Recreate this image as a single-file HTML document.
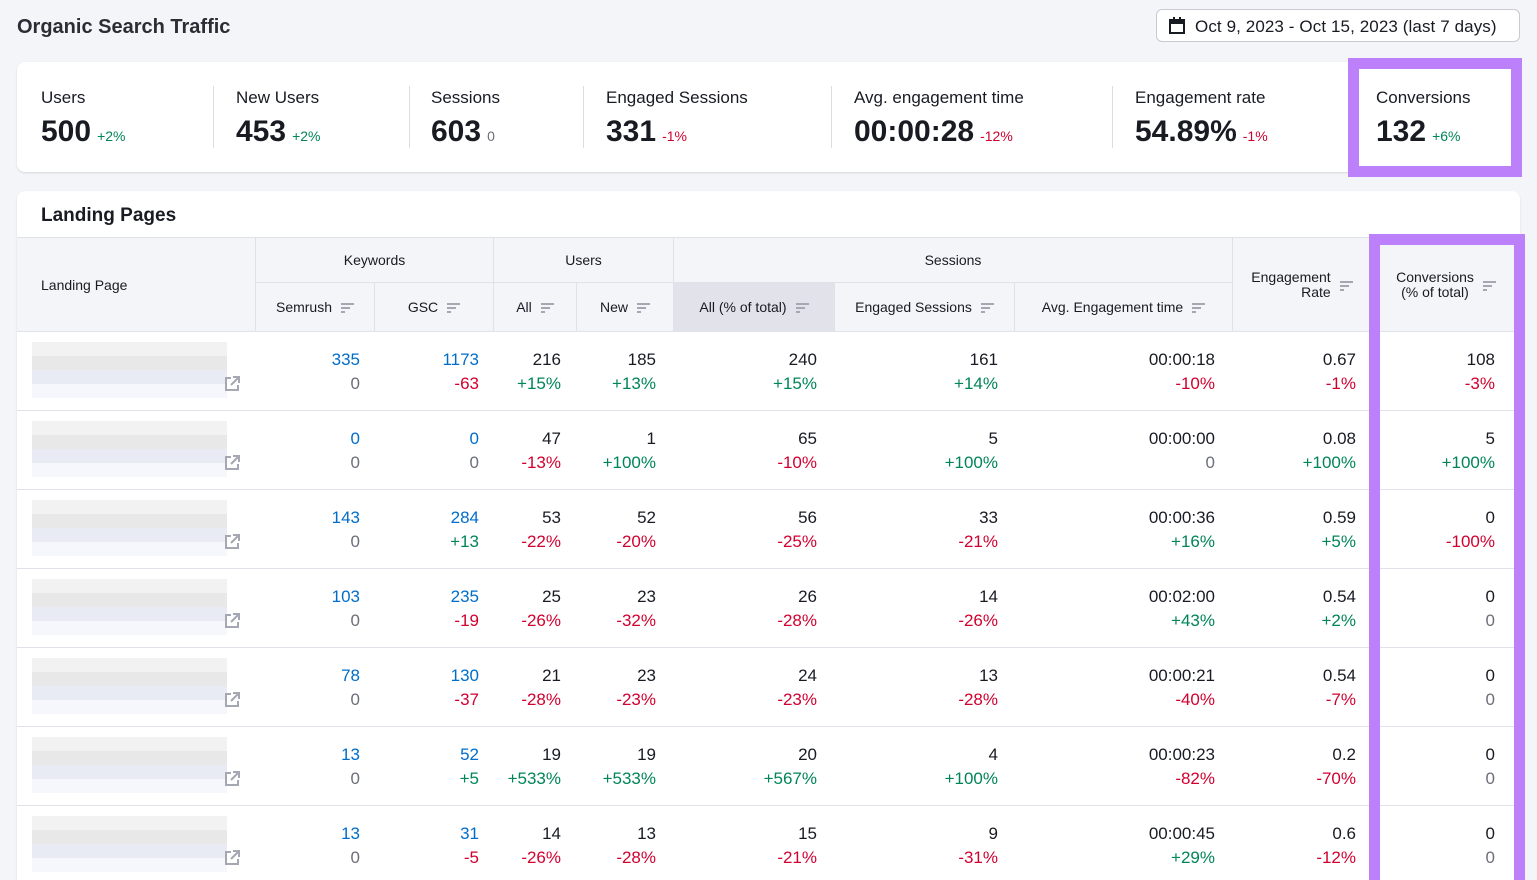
<!DOCTYPE html>
<html><head><meta charset="utf-8"><style>
*{box-sizing:border-box;margin:0;padding:0}
html,body{width:1537px;height:880px;overflow:hidden}
body{background:#f4f5f9;font-family:"Liberation Sans",sans-serif;color:#191b23;position:relative}
.abs{position:absolute}
h1{position:absolute;left:17px;top:16px;font-size:20px;font-weight:bold;color:#2b2d35}
.date{left:1156px;top:9px;width:364px;height:33px;border:1px solid #c9cad1;border-radius:6px;background:#fff;font-size:17px;padding:7px 0 0 38px;color:#191b23;letter-spacing:.1px}
.kpi{left:17px;top:62px;width:1503px;height:110px;background:#fff;border-radius:8px;box-shadow:0 1px 2px rgba(0,0,0,.12)}
.k{position:absolute;top:26px}
.k .l{font-size:17px;color:#191b23}
.k .v{font-size:30px;font-weight:bold;margin-top:7px}
.k .v span{font-size:14px;font-weight:normal;margin-left:6px}
.sep{position:absolute;top:24px;width:1px;height:62px;background:#dcdde3}
.g{color:#008557}.r{color:#d1002f}.b{color:#006dca}.gr{color:#6c6e79}
.card{left:17px;top:191px;width:1503px;height:700px;background:#fff;border-radius:8px;box-shadow:0 1px 2px rgba(0,0,0,.1)}
.hd{position:absolute;background:#f4f5f9;border-right:1px solid #e0e1e9;border-bottom:1px solid #e0e1e9;font-size:14px;color:#191b23;display:flex;align-items:center;justify-content:center}
.sort{display:inline-block;width:13px;height:10px;margin-left:9px;position:relative;top:1px}
.sort i{display:block;height:2px;background:#a5a7b2;margin-bottom:2px}
.row{position:absolute;left:17px;width:1503px;height:79px;border-bottom:1px solid #e0e1e9}
.c{position:absolute;top:16px;text-align:right;font-size:17px;line-height:24px}
.ph{position:absolute;left:15px;top:10px;width:195px;height:56px;background:linear-gradient(#f1f1f1 0 25%,#e6e6e6 25% 50%,#e6e9f3 50% 75%,#f5f6fb 75%);opacity:.9}
.ext{position:absolute;left:207px;top:44px}
</style></head><body>
<h1>Organic Search Traffic</h1>
<div class="abs date"><svg class="abs" style="left:11px;top:7px" width="18" height="18" viewBox="0 0 18 18"><rect x="2" y="3" width="14" height="13" fill="none" stroke="#191b23" stroke-width="2"/><rect x="2" y="3" width="14" height="4" fill="#191b23"/><rect x="5" y="0" width="2" height="4" fill="#191b23"/><rect x="11" y="0" width="2" height="4" fill="#191b23"/></svg>Oct 9, 2023 - Oct 15, 2023 (last 7 days)</div>
<div class="abs kpi">
<div class="k" style="left:24px"><div class="l">Users</div><div class="v">500<span class="g">+2%</span></div></div>
<div class="sep" style="left:196px"></div>
<div class="k" style="left:219px"><div class="l">New Users</div><div class="v">453<span class="g">+2%</span></div></div>
<div class="sep" style="left:392px"></div>
<div class="k" style="left:414px"><div class="l">Sessions</div><div class="v">603<span class="gr">0</span></div></div>
<div class="sep" style="left:566px"></div>
<div class="k" style="left:589px"><div class="l">Engaged Sessions</div><div class="v">331<span class="r">-1%</span></div></div>
<div class="sep" style="left:814px"></div>
<div class="k" style="left:837px"><div class="l">Avg. engagement time</div><div class="v">00:00:28<span class="r">-12%</span></div></div>
<div class="sep" style="left:1095px"></div>
<div class="k" style="left:1118px"><div class="l">Engagement rate</div><div class="v">54.89%<span class="r">-1%</span></div></div>
<div class="k" style="left:1359px"><div class="l">Conversions</div><div class="v">132<span class="g">+6%</span></div></div>
</div>
<div class="abs" style="left:1348px;top:58px;width:174px;height:119px;border:11px solid #bb80fa"></div>
<div class="abs card">
<div class="abs" style="left:24px;top:14px;font-size:19px;font-weight:bold">Landing Pages</div>
</div>
<div class="abs" style="left:17px;top:237px;width:1503px;height:1px;background:#e0e1e9"></div>
<div class="hd" style="left:17px;top:238px;width:239px;height:94px;justify-content:flex-start;padding-left:24px">Landing Page</div>
<div class="hd" style="left:256px;top:238px;width:238px;height:45px">Keywords</div>
<div class="hd" style="left:494px;top:238px;width:180px;height:45px">Users</div>
<div class="hd" style="left:674px;top:238px;width:559px;height:45px">Sessions</div>
<div class="hd" style="left:256px;top:283px;width:119px;height:49px">Semrush<span class="sort"><i style="width:13px"></i><i style="width:9px"></i><i style="width:4px"></i></span></div>
<div class="hd" style="left:375px;top:283px;width:119px;height:49px">GSC<span class="sort"><i style="width:13px"></i><i style="width:9px"></i><i style="width:4px"></i></span></div>
<div class="hd" style="left:494px;top:283px;width:83px;height:49px">All<span class="sort"><i style="width:13px"></i><i style="width:9px"></i><i style="width:4px"></i></span></div>
<div class="hd" style="left:577px;top:283px;width:97px;height:49px">New<span class="sort"><i style="width:13px"></i><i style="width:9px"></i><i style="width:4px"></i></span></div>
<div class="hd" style="left:674px;top:283px;width:161px;height:49px;background:#e1e2ea">All (% of total)<span class="sort"><i style="width:13px"></i><i style="width:9px"></i><i style="width:4px"></i></span></div>
<div class="hd" style="left:835px;top:283px;width:180px;height:49px">Engaged Sessions<span class="sort"><i style="width:13px"></i><i style="width:9px"></i><i style="width:4px"></i></span></div>
<div class="hd" style="left:1015px;top:283px;width:218px;height:49px">Avg. Engagement time<span class="sort"><i style="width:13px"></i><i style="width:9px"></i><i style="width:4px"></i></span></div>
<div class="hd" style="left:1233px;top:238px;width:139px;height:94px;text-align:right;line-height:15px"><span>Engagement<br>Rate</span><span class="sort"><i style="width:13px"></i><i style="width:9px"></i><i style="width:4px"></i></span></div>
<div class="hd" style="left:1372px;top:238px;width:148px;height:94px;text-align:center;line-height:15px;border-right:none"><span>Conversions<br>(% of total)</span><span class="sort"><i style="width:13px"></i><i style="width:9px"></i><i style="width:4px"></i></span></div>

<div class="row" style="top:332px"><div class="ph"></div><svg class="ext" width="16" height="16" viewBox="0 0 16 16" fill="none" stroke="#a5a7b2" stroke-width="2"><path d="M7 2H2v12h12V9M9 1h6v6M15 1L7 9"/></svg>
<div class="c b" style="right:1160px">335<br><span class="gr">0</span></div><div class="c b" style="right:1041px">1173<br><span class="r">-63</span></div><div class="c" style="right:959px">216<br><span class="g">+15%</span></div><div class="c" style="right:864px">185<br><span class="g">+13%</span></div><div class="c" style="right:703px">240<br><span class="g">+15%</span></div><div class="c" style="right:522px">161<br><span class="g">+14%</span></div><div class="c" style="right:305px">00:00:18<br><span class="r">-10%</span></div><div class="c" style="right:164px">0.67<br><span class="r">-1%</span></div><div class="c" style="right:25px">108<br><span class="r">-3%</span></div></div>
<div class="row" style="top:411px"><div class="ph"></div><svg class="ext" width="16" height="16" viewBox="0 0 16 16" fill="none" stroke="#a5a7b2" stroke-width="2"><path d="M7 2H2v12h12V9M9 1h6v6M15 1L7 9"/></svg>
<div class="c b" style="right:1160px">0<br><span class="gr">0</span></div><div class="c b" style="right:1041px">0<br><span class="gr">0</span></div><div class="c" style="right:959px">47<br><span class="r">-13%</span></div><div class="c" style="right:864px">1<br><span class="g">+100%</span></div><div class="c" style="right:703px">65<br><span class="r">-10%</span></div><div class="c" style="right:522px">5<br><span class="g">+100%</span></div><div class="c" style="right:305px">00:00:00<br><span class="gr">0</span></div><div class="c" style="right:164px">0.08<br><span class="g">+100%</span></div><div class="c" style="right:25px">5<br><span class="g">+100%</span></div></div>
<div class="row" style="top:490px"><div class="ph"></div><svg class="ext" width="16" height="16" viewBox="0 0 16 16" fill="none" stroke="#a5a7b2" stroke-width="2"><path d="M7 2H2v12h12V9M9 1h6v6M15 1L7 9"/></svg>
<div class="c b" style="right:1160px">143<br><span class="gr">0</span></div><div class="c b" style="right:1041px">284<br><span class="g">+13</span></div><div class="c" style="right:959px">53<br><span class="r">-22%</span></div><div class="c" style="right:864px">52<br><span class="r">-20%</span></div><div class="c" style="right:703px">56<br><span class="r">-25%</span></div><div class="c" style="right:522px">33<br><span class="r">-21%</span></div><div class="c" style="right:305px">00:00:36<br><span class="g">+16%</span></div><div class="c" style="right:164px">0.59<br><span class="g">+5%</span></div><div class="c" style="right:25px">0<br><span class="r">-100%</span></div></div>
<div class="row" style="top:569px"><div class="ph"></div><svg class="ext" width="16" height="16" viewBox="0 0 16 16" fill="none" stroke="#a5a7b2" stroke-width="2"><path d="M7 2H2v12h12V9M9 1h6v6M15 1L7 9"/></svg>
<div class="c b" style="right:1160px">103<br><span class="gr">0</span></div><div class="c b" style="right:1041px">235<br><span class="r">-19</span></div><div class="c" style="right:959px">25<br><span class="r">-26%</span></div><div class="c" style="right:864px">23<br><span class="r">-32%</span></div><div class="c" style="right:703px">26<br><span class="r">-28%</span></div><div class="c" style="right:522px">14<br><span class="r">-26%</span></div><div class="c" style="right:305px">00:02:00<br><span class="g">+43%</span></div><div class="c" style="right:164px">0.54<br><span class="g">+2%</span></div><div class="c" style="right:25px">0<br><span class="gr">0</span></div></div>
<div class="row" style="top:648px"><div class="ph"></div><svg class="ext" width="16" height="16" viewBox="0 0 16 16" fill="none" stroke="#a5a7b2" stroke-width="2"><path d="M7 2H2v12h12V9M9 1h6v6M15 1L7 9"/></svg>
<div class="c b" style="right:1160px">78<br><span class="gr">0</span></div><div class="c b" style="right:1041px">130<br><span class="r">-37</span></div><div class="c" style="right:959px">21<br><span class="r">-28%</span></div><div class="c" style="right:864px">23<br><span class="r">-23%</span></div><div class="c" style="right:703px">24<br><span class="r">-23%</span></div><div class="c" style="right:522px">13<br><span class="r">-28%</span></div><div class="c" style="right:305px">00:00:21<br><span class="r">-40%</span></div><div class="c" style="right:164px">0.54<br><span class="r">-7%</span></div><div class="c" style="right:25px">0<br><span class="gr">0</span></div></div>
<div class="row" style="top:727px"><div class="ph"></div><svg class="ext" width="16" height="16" viewBox="0 0 16 16" fill="none" stroke="#a5a7b2" stroke-width="2"><path d="M7 2H2v12h12V9M9 1h6v6M15 1L7 9"/></svg>
<div class="c b" style="right:1160px">13<br><span class="gr">0</span></div><div class="c b" style="right:1041px">52<br><span class="g">+5</span></div><div class="c" style="right:959px">19<br><span class="g">+533%</span></div><div class="c" style="right:864px">19<br><span class="g">+533%</span></div><div class="c" style="right:703px">20<br><span class="g">+567%</span></div><div class="c" style="right:522px">4<br><span class="g">+100%</span></div><div class="c" style="right:305px">00:00:23<br><span class="r">-82%</span></div><div class="c" style="right:164px">0.2<br><span class="r">-70%</span></div><div class="c" style="right:25px">0<br><span class="gr">0</span></div></div>
<div class="row" style="top:806px"><div class="ph"></div><svg class="ext" width="16" height="16" viewBox="0 0 16 16" fill="none" stroke="#a5a7b2" stroke-width="2"><path d="M7 2H2v12h12V9M9 1h6v6M15 1L7 9"/></svg>
<div class="c b" style="right:1160px">13<br><span class="gr">0</span></div><div class="c b" style="right:1041px">31<br><span class="r">-5</span></div><div class="c" style="right:959px">14<br><span class="r">-26%</span></div><div class="c" style="right:864px">13<br><span class="r">-28%</span></div><div class="c" style="right:703px">15<br><span class="r">-21%</span></div><div class="c" style="right:522px">9<br><span class="r">-31%</span></div><div class="c" style="right:305px">00:00:45<br><span class="g">+29%</span></div><div class="c" style="right:164px">0.6<br><span class="r">-12%</span></div><div class="c" style="right:25px">0<br><span class="gr">0</span></div></div>
<div class="abs" style="left:1369px;top:234px;width:156px;height:660px;border:11px solid #bb80fa"></div>
</body></html>
